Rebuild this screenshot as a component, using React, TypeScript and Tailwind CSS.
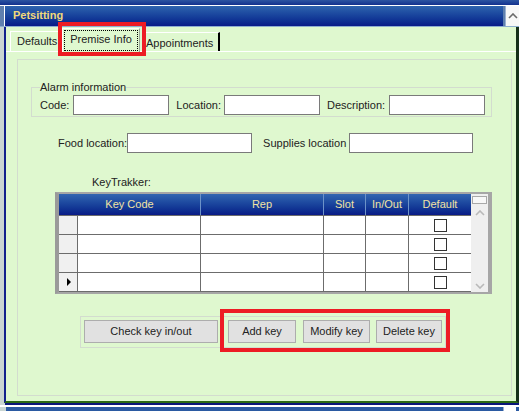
import React from "react";

const rows = [0, 1, 2, 3];

function Box({ w }: { w: string }) {
  return <div className={`h-[20px] border border-[#7a7a7a] bg-white ${w}`} />;
}

function Chevron({ down }: { down?: boolean }) {
  return (
    <svg width="10" height="6" viewBox="0 0 10 6" className="block">
      <polyline
        points={down ? "1,1 5,5 9,1" : "1,5 5,1 9,5"}
        fill="none"
        stroke="currentColor"
        strokeWidth="1.6"
      />
    </svg>
  );
}

export default function App() {
  return (
    <div className="relative h-[411px] w-[519px] overflow-hidden bg-[#c9d5d2] font-['Liberation_Sans',Arial,sans-serif] text-[11px] text-[#222]">
      {/* strip of the panel above */}
      <div className="h-[5px] bg-linear-to-b from-[#2c54a2] to-[#13308d]" />

      {/* title bar */}
      <div className="flex h-[21px] border-t border-white bg-[#5f7fae]">
        <div className="ml-[4px] flex-1 border-l border-white bg-linear-to-b from-[#2f63ae] to-[#0a1a88] pl-[8px] text-[11px] font-bold leading-[19px] text-[#f1d97a]">
          Petsitting
        </div>
        <div className="ml-[2px] flex w-[14px] items-center justify-center border-l border-[#9ab0d0] bg-[#f7f7f7] text-[#6a6a6a]">
          <Chevron />
        </div>
      </div>
      <div className="h-px bg-[#8eaed0]" />

      {/* main frame */}
      <div className="ml-[4px] flex h-[376px] flex-col border-b-2 border-l-2 border-r-[3px] border-b-[#2c6a14] border-l-[#11208c] border-r-[#16301a] bg-[#dff8cf]">
        {/* tab strip */}
        <div className="flex h-[24px] items-end pl-[4px] pt-[2px]">
          <div className="h-[20px] w-[48px] border-l border-t border-white pl-[6px] pt-[3px] leading-[13px]">
            Defaults
          </div>
          <div className="relative z-10 -mb-px ml-[4px] h-[24px] w-[78px] border-l border-r border-t border-white border-r-[#9aa89a] bg-[#dff8cf] px-[1px] pt-[1px]">
            <div className="h-[21px] border border-dotted border-black pt-[2px] text-center leading-[13px]">
              Premise Info
            </div>
          </div>
          <div className="ml-[2px] h-[19px] w-[78px] border-r-2 border-t border-r-black border-t-white pl-[4px] pt-[4px] leading-[13px]">
            Appointments
          </div>
        </div>
        <div className="h-px bg-white" />

        {/* tab page */}
        <div className="ml-[11px] mt-[7px] h-[337px] w-[495px] border border-[#d3dccf]">
          <fieldset className="ml-[13px] mt-[21px] w-[461px] border border-[#d3dccf] pb-[1px] pl-[8px] pt-[1px]">
            <legend className="leading-[13px]">Alarm information</legend>
            <div className="flex items-center">
              <span>Code:</span>
              <div className="ml-[4px]">
                <Box w="w-[96px]" />
              </div>
              <span className="ml-[7px]">Location:</span>
              <div className="ml-[3px]">
                <Box w="w-[96px]" />
              </div>
              <span className="ml-[7px]">Description:</span>
              <div className="ml-[4px]">
                <Box w="w-[96px]" />
              </div>
            </div>
          </fieldset>

          <div className="ml-[40px] mt-[16px] flex items-center">
            <span>Food location:</span>
            <Box w="w-[125px]" />
            <span className="ml-[11px]">Supplies location</span>
            <div className="ml-[3px]">
              <Box w="w-[124px]" />
            </div>
          </div>

          <div className="ml-[74px] mt-[23px] leading-[13px]">KeyTrakker:</div>

          {/* grid */}
          <div className="ml-[37px] mt-[3px] flex h-[102px] w-[437px] border-b-2 border-l-[4px] border-r-[4px] border-t-2 border-[#a6a6a6] border-l-[#9a9a9a]">
            <div className="flex w-[412px] flex-col border-b border-[#6c6c6c]">
              <div className="flex h-[21px] bg-linear-to-b from-[#3366b1] to-[#0a1a86] leading-[21px] text-[#f0e3a4]">
                <div className="w-[141px] text-center">Key Code</div>
                <div className="w-[123px] border-l border-[#6d93c8] text-center">Rep</div>
                <div className="w-[42px] border-l border-[#6d93c8] text-center">Slot</div>
                <div className="w-[43px] border-l border-[#6d93c8] text-center">In/Out</div>
                <div className="w-[63px] border-l border-[#6d93c8] text-center">Default</div>
              </div>
              {rows.map((r) => (
                <div key={r} className="flex h-[19px] border-t border-[#6c6c6c] bg-white">
                  <div className="flex w-[18px] items-center bg-[#f0f0f0] pl-[8px]">
                    {r === 3 && (
                      <svg width="4" height="8" viewBox="0 0 4 8">
                        <polygon points="0,0 4,4 0,8" fill="#000" />
                      </svg>
                    )}
                  </div>
                  <div className="w-[123px] border-l border-[#6c6c6c]" />
                  <div className="w-[123px] border-l border-[#6c6c6c]" />
                  <div className="w-[42px] border-l border-[#6c6c6c]" />
                  <div className="w-[43px] border-l border-[#6c6c6c]" />
                  <div className="flex w-[63px] items-center justify-center border-l border-[#6c6c6c]">
                    <div className="h-[13px] w-[13px] border border-[#333] bg-white" />
                  </div>
                </div>
              ))}
            </div>
            <div className="flex w-[17px] flex-col items-center bg-[#efefef] text-[#b9b9b9]">
              <div className="mt-[2px] h-[8px] w-[15px] border border-[#a8a8a8] bg-[#f8f8f8]" />
              <div className="mt-[6px]">
                <Chevron />
              </div>
              <div className="flex-1" />
              <div className="mb-[3px]">
                <Chevron down />
              </div>
            </div>
          </div>

          {/* buttons */}
          <div className="ml-[62px] mt-[22px] flex h-[32px] w-[366px] border border-[#d3dccf] pl-[3px] pt-[3px]">
            <div className="h-[23px] w-[134px] border border-[#adadad] bg-[#e1e1e1] text-center leading-[21px]">
              Check key in/out
            </div>
            <div className="ml-[10px] h-[23px] w-[68px] border border-[#adadad] bg-[#e1e1e1] text-center leading-[21px]">
              Add key
            </div>
            <div className="ml-[7px] h-[23px] w-[67px] border border-[#adadad] bg-[#e1e1e1] text-center leading-[21px]">
              Modify key
            </div>
            <div className="ml-[6px] h-[23px] w-[66px] border border-[#adadad] bg-[#e1e1e1] text-center leading-[21px]">
              Delete key
            </div>
          </div>
        </div>
      </div>

      {/* bottom edge */}
      <div className="ml-[5px] h-[2px] bg-[#0b1679]" />
      <div className="h-[2px] bg-white" />
      <div className="flex h-[5px]">
        <div className="ml-[6px] w-[497px] bg-[#2b5aa2]" />
        <div className="w-[13px] border-l border-[#9ab0d0] bg-white" />
        <div className="flex-1 bg-[#2b5aa2]" />
      </div>

      {/* highlight marks */}
      <div className="absolute left-[58px] top-[22px] h-[34px] w-[88px] border-4 border-[#ed1c24]" />
      <div className="absolute left-[220px] top-[309px] h-[43px] w-[230px] border-4 border-[#ed1c24]" />
    </div>
  );
}
